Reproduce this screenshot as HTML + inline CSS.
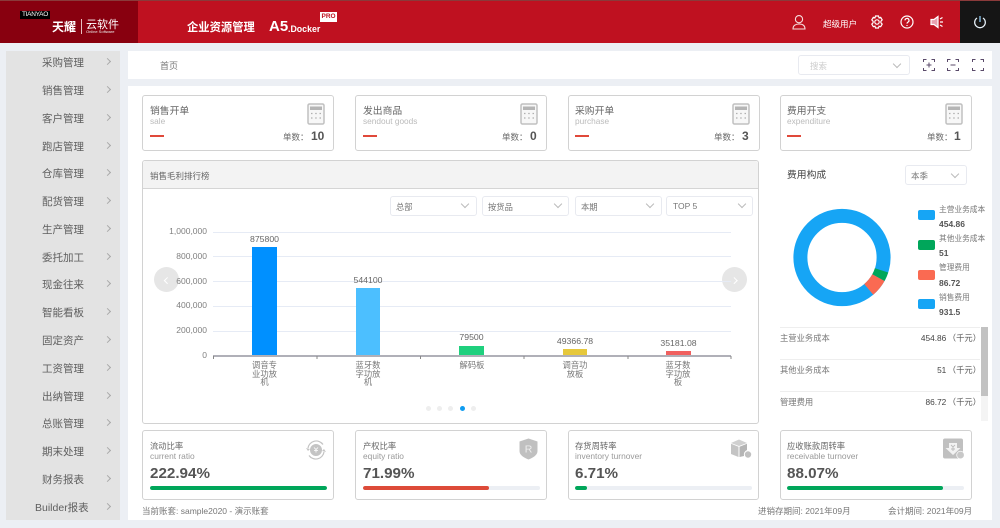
<!DOCTYPE html>
<html lang="zh"><head><meta charset="utf-8"><title>A5 Docker</title>
<style>
html,body{margin:0;padding:0}
body{width:1000px;height:528px;overflow:hidden;background:#eceff4;position:relative;font-family:"Liberation Sans","Noto Sans CJK SC",sans-serif;color:#666}
div,span.t{position:absolute}
.t{position:absolute;white-space:nowrap;line-height:14px;height:14px}
.m{font-size:10.5px;color:#5f5f5f;left:42px;margin-top:.5px}
.m2{position:absolute;left:105px;width:4px;height:4px;margin-top:-1px;border-top:1px solid #aaa;border-right:1px solid #aaa;transform:rotate(45deg)}
.card{background:#fff;border:1px solid #d2d2d2;border-radius:3px;box-sizing:border-box}
.sel{background:#fff;border:1px solid #e8eaf0;border-radius:3px;box-sizing:border-box;height:20px;top:196px}
.ch{position:absolute;width:5px;height:5px;border-right:1px solid #bbb;border-bottom:1px solid #bbb;transform:rotate(45deg)}
.ct{font-size:9.8px;color:#666;margin-top:.5px}.cs{font-size:8.3px;color:#bbb}
.rl{background:#e0493a;height:1.5px;width:14px;top:135px}
.ax{font-size:8.5px;color:#808080;text-align:right;width:50px;left:157px;margin-top:0}
.gl{left:213px;width:518px;height:1px;background:#e6ebf5}
.bl{font-size:8.7px;color:#666;text-align:center;width:60px}
.xl{font-size:8.3px;color:#777;text-align:center;width:26px;line-height:8.5px;white-space:normal;height:auto;position:absolute}
.bt{font-size:8.3px;color:#666;margin-top:.5px}.bs{font-size:8.4px;color:#999;margin-top:.5px}
.bv{font-size:15.2px;font-weight:bold;color:#555;line-height:18px;height:18px}
.pg{top:486px;height:4px;background:#eceff4;border-radius:2px;width:177px;overflow:hidden}
.pg div{top:0;left:0;height:4px;border-radius:2px}
.lg{font-size:7.7px;color:#777;left:939px}.lv{font-size:8.5px;color:#555;left:939px;font-weight:bold}
.sw{left:918px;width:17px;height:10px;border-radius:2px}
.rk{font-size:8.3px;color:#777;left:780px}.rv{font-size:8.3px;color:#555;right:19px}
.rv b{font-weight:normal;color:#444;margin-right:1.5px}
.ft{font-size:8.5px;color:#777}
.dot{width:5px;height:5px;border-radius:50%;background:#eee;top:406px}
.ar{width:25px;height:25px;border-radius:50%;background:#e6e6e6;top:267px}
svg{position:absolute}
</style></head><body>

<div style="left:0;top:0;width:1000px;height:43px;background:#bf1120"></div>
<div style="left:0;top:0;width:1000px;height:1px;background:#8a3a3a"></div>
<div style="left:0;top:1px;width:138px;height:42px;background:#88000f"></div>
<div style="left:960px;top:1px;width:40px;height:42px;background:#151515"></div>

<div style="left:20px;top:11px;width:30px;height:8px;background:#000"></div>
<span class="t" style="left:22px;top:8px;font-size:6.5px;color:#fff;letter-spacing:-.3px">TIANYAO</span>
<span class="t" style="left:52px;top:20px;font-size:12px;font-weight:bold;color:#fff">天耀</span>
<div style="left:80.5px;top:19px;width:1px;height:15px;background:#e8c0c0"></div>
<span class="t" style="left:86px;top:17.5px;font-size:11px;color:#fff">云软件</span>
<span class="t" style="left:86px;top:25px;font-size:4px;color:#eee">Online Software</span>
<span class="t" style="left:187px;top:21px;font-size:11.3px;color:#fff;font-weight:bold">企业资源管理</span>
<span class="t" style="left:269px;top:20px;font-size:15px;color:#fff;font-weight:bold">A5</span>
<span class="t" style="left:288px;top:22px;font-size:8.8px;color:#fff;font-weight:bold">.Docker</span>
<div style="left:320px;top:12px;width:17px;height:10px;background:#fff"></div>
<span class="t" style="left:321.5px;top:10px;font-size:6.5px;color:#bf1120;font-weight:bold">PRO</span>

<svg style="left:791px;top:14px" width="16" height="16" viewBox="0 0 16 16" fill="none" stroke="#f6dede" stroke-width="1.1"><circle cx="8" cy="5.2" r="3.6"/><path d="M2 15c0-3.6 2.6-5 6-5s6 1.4 6 5z"/></svg>
<span class="t" style="left:823px;top:16.5px;font-size:8.5px;color:#fff">超级用户</span>
<svg style="left:870px;top:15px" width="14" height="14" viewBox="0 0 14 14" fill="none" stroke="#fff" stroke-width="1.2"><path d="M5.5 1h3l.5 1.800 1.700-.5 1.500 2.600-1.300 1.300v1.600l1.300 1.300-1.500 2.600-1.700-.5-.5 1.800h-3l-.5-1.800-1.700.5L1.800 9.100l1.300-1.300V6.200L1.800 4.900l1.500-2.600 1.700.5z"/><circle cx="7" cy="7" r="2.2"/></svg>
<svg style="left:900px;top:15px" width="14" height="14" viewBox="0 0 14 14" fill="none" stroke="#fff" stroke-width="1.2"><circle cx="7" cy="7" r="6"/><path d="M5 5.400a2 2 0 1 1 3 1.700c-.7.400-1 .8-1 1.500"/><path d="M7 10v1"/></svg>
<svg style="left:930px;top:15px" width="14" height="14" viewBox="0 0 14 14" fill="none" stroke="#fff" stroke-width="1.2"><path d="M1 4.500h3L8 1.500v11l-4-3H1z" fill="#e8a0b0"/><path d="M10 4l2.500-1.500M10 7h3M10 10l2.500 1.500"/></svg>
<svg style="left:973px;top:15px" width="14" height="14" viewBox="0 0 14 14" fill="none" stroke="#e8f2fa" stroke-width="1.3"><path d="M4 3a5.300 5.300 0 1 0 6 0"/><path d="M7 1v6" stroke="#8cc8f0"/></svg>

<div style="left:6px;top:51px;width:114px;height:469px;background:#e3e3e3"></div>
<span class="t m" style="top:55px">采购管理</span><i class="m2" style="top:60px"></i>
<span class="t m" style="top:83px">销售管理</span><i class="m2" style="top:88px"></i>
<span class="t m" style="top:111px">客户管理</span><i class="m2" style="top:116px"></i>
<span class="t m" style="top:139px">跑店管理</span><i class="m2" style="top:144px"></i>
<span class="t m" style="top:166px">仓库管理</span><i class="m2" style="top:171px"></i>
<span class="t m" style="top:194px">配货管理</span><i class="m2" style="top:199px"></i>
<span class="t m" style="top:222px">生产管理</span><i class="m2" style="top:227px"></i>
<span class="t m" style="top:250px">委托加工</span><i class="m2" style="top:255px"></i>
<span class="t m" style="top:277px">现金往来</span><i class="m2" style="top:282px"></i>
<span class="t m" style="top:305px">智能看板</span><i class="m2" style="top:310px"></i>
<span class="t m" style="top:333px">固定资产</span><i class="m2" style="top:338px"></i>
<span class="t m" style="top:361px">工资管理</span><i class="m2" style="top:366px"></i>
<span class="t m" style="top:389px">出纳管理</span><i class="m2" style="top:394px"></i>
<span class="t m" style="top:416px">总账管理</span><i class="m2" style="top:421px"></i>
<span class="t m" style="top:444px">期末处理</span><i class="m2" style="top:449px"></i>
<span class="t m" style="top:472px">财务报表</span><i class="m2" style="top:477px"></i>
<span class="t m" style="top:500px;left:35px">Builder报表</span><i class="m2" style="top:505px"></i>

<div style="left:128px;top:51px;width:864px;height:28px;background:#fff"></div>
<div style="left:128px;top:86px;width:864px;height:434px;background:#fff"></div>
<span class="t" style="left:160px;top:59px;font-size:9px;color:#777">首页</span>
<div class="sel" style="left:798px;top:55px;width:112px"></div>
<span class="t" style="left:810px;top:59px;font-size:8.5px;color:#ccc">搜索</span>
<i class="ch" style="left:894px;top:61px"></i>

<svg style="left:923px;top:59px" width="62" height="12" viewBox="0 0 62 12" fill="none" stroke="#5a4a6a" stroke-width="1"><path d="M.5 3v-2.500h3M8.500.5h3V3M11.500 9v2.500h-3M3.500 11.500h-3V9M6 3.500v5M3.500 6h5"/><path d="M24.500 3v-2.500h3M32.500.5h3V3M35.500 9v2.500h-3M27.500 11.500h-3V9M27.500 6h5"/><path d="M49.500 3v-2.500h3M57.500.5h3V3M60.500 9v2.500h-3M52.500 11.500h-3V9"/></svg>

<div class="card" style="left:142px;top:95px;width:192px;height:56px"></div>
<span class="t ct" style="left:150px;top:104px">销售开单</span><span class="t cs" style="left:150px;top:114px">sale</span><div class="rl" style="left:150px"></div>
<span class="t" style="left:283px;top:130px;font-size:8.5px;color:#666">单数：</span><span class="t" style="left:311px;top:129px;font-size:12px;font-weight:bold;color:#555">10</span>
<div class="card" style="left:355px;top:95px;width:192px;height:56px"></div>
<span class="t ct" style="left:363px;top:104px">发出商品</span><span class="t cs" style="left:363px;top:114px">sendout goods</span><div class="rl" style="left:363px"></div>
<span class="t" style="left:502px;top:130px;font-size:8.5px;color:#666">单数：</span><span class="t" style="left:530px;top:129px;font-size:12px;font-weight:bold;color:#555">0</span>
<div class="card" style="left:568px;top:95px;width:192px;height:56px"></div>
<span class="t ct" style="left:575px;top:104px">采购开单</span><span class="t cs" style="left:575px;top:114px">purchase</span><div class="rl" style="left:575px"></div>
<span class="t" style="left:714px;top:130px;font-size:8.5px;color:#666">单数：</span><span class="t" style="left:742px;top:129px;font-size:12px;font-weight:bold;color:#555">3</span>
<div class="card" style="left:780px;top:95px;width:192px;height:56px"></div>
<span class="t ct" style="left:787px;top:104px">费用开支</span><span class="t cs" style="left:787px;top:114px">expenditure</span><div class="rl" style="left:787px"></div>
<span class="t" style="left:927px;top:130px;font-size:8.5px;color:#666">单数：</span><span class="t" style="left:954px;top:129px;font-size:12px;font-weight:bold;color:#555">1</span>

<svg style="left:307px;top:103px" width="18" height="22" viewBox="0 0 18 22"><rect x="1" y="1" width="16" height="20" rx="1.5" fill="#f7f7f7" stroke="#c0c0c0" stroke-width="1.5"/><rect x="3" y="3.500" width="12" height="3.500" fill="#b5b5b5"/><path d="M4 10.500h1.500M8.200 10.500h1.500M12.500 10.500h1.500M4 15h1.500M8.200 15h1.500M12.500 15h1.500" stroke="#b0b0b0" stroke-width="1.3"/></svg>
<svg style="left:520px;top:103px" width="18" height="22" viewBox="0 0 18 22"><rect x="1" y="1" width="16" height="20" rx="1.5" fill="#f7f7f7" stroke="#c0c0c0" stroke-width="1.5"/><rect x="3" y="3.500" width="12" height="3.500" fill="#b5b5b5"/><path d="M4 10.500h1.500M8.200 10.500h1.500M12.500 10.500h1.500M4 15h1.500M8.200 15h1.500M12.500 15h1.500" stroke="#b0b0b0" stroke-width="1.3"/></svg>
<svg style="left:732px;top:103px" width="18" height="22" viewBox="0 0 18 22"><rect x="1" y="1" width="16" height="20" rx="1.5" fill="#f7f7f7" stroke="#c0c0c0" stroke-width="1.5"/><rect x="3" y="3.500" width="12" height="3.500" fill="#b5b5b5"/><path d="M4 10.500h1.500M8.200 10.500h1.500M12.500 10.500h1.500M4 15h1.500M8.200 15h1.500M12.500 15h1.500" stroke="#b0b0b0" stroke-width="1.3"/></svg>
<svg style="left:945px;top:103px" width="18" height="22" viewBox="0 0 18 22"><rect x="1" y="1" width="16" height="20" rx="1.5" fill="#f7f7f7" stroke="#c0c0c0" stroke-width="1.5"/><rect x="3" y="3.500" width="12" height="3.500" fill="#b5b5b5"/><path d="M4 10.500h1.500M8.200 10.500h1.500M12.500 10.500h1.500M4 15h1.500M8.200 15h1.500M12.500 15h1.500" stroke="#b0b0b0" stroke-width="1.3"/></svg>

<div class="card" style="left:142px;top:160px;width:617px;height:264px"></div>
<div style="left:143px;top:161px;width:615px;height:27px;background:#f3f3f3;border-bottom:1px solid #d5d5d5;border-radius:3px 3px 0 0"></div>
<span class="t" style="left:150px;top:168.500px;font-size:8.5px;color:#666">销售毛利排行榜</span>

<div class="sel" style="left:390px;width:87px"></div><span class="t" style="left:396px;top:199.500px;font-size:8.3px;color:#777">总部</span><i class="ch" style="left:462px;top:201px"></i>
<div class="sel" style="left:482px;width:87px"></div><span class="t" style="left:488px;top:199.500px;font-size:8.3px;color:#777">按货品</span><i class="ch" style="left:555px;top:201px"></i>
<div class="sel" style="left:575px;width:87px"></div><span class="t" style="left:581px;top:199.500px;font-size:8.3px;color:#777">本期</span><i class="ch" style="left:647px;top:201px"></i>
<div class="sel" style="left:666px;width:87px"></div><span class="t" style="left:673px;top:199px;font-size:8.5px;color:#777">TOP 5</span><i class="ch" style="left:739px;top:201px"></i>

<div class="ar" style="left:154px"></div>
<div style="left:165px;top:278px;width:3.5px;height:3.5px;border-left:1px solid #fff;border-bottom:1px solid #fff;transform:rotate(45deg)"></div>
<div class="ar" style="left:722px"></div>
<div style="left:732px;top:278px;width:3.5px;height:3.5px;border-right:1px solid #fff;border-top:1px solid #fff;transform:rotate(45deg)"></div>

<div class="gl" style="top:232px"></div><div class="gl" style="top:256px"></div><div class="gl" style="top:281px"></div><div class="gl" style="top:306px"></div><div class="gl" style="top:331px"></div>
<span class="t ax" style="top:224px">1,000,000</span><span class="t ax" style="top:249px">800,000</span><span class="t ax" style="top:274px">600,000</span><span class="t ax" style="top:298px">400,000</span><span class="t ax" style="top:323px">200,000</span><span class="t ax" style="top:348px">0</span>

<div style="left:252px;top:247px;width:25px;height:109px;background:#0090ff"></div>
<div style="left:356px;top:288px;width:24px;height:68px;background:#4cbfff"></div>
<div style="left:459px;top:346px;width:25px;height:10px;background:#1fd07e"></div>
<div style="left:563px;top:349px;width:24px;height:7px;background:#e6c83c"></div>
<div style="left:666px;top:351px;width:25px;height:5px;background:#f0605f"></div>
<div style="left:213px;top:355px;width:518px;height:1.5px;background:#b0b0b8"></div>
<svg style="left:213px;top:356px" width="520" height="3"><path d="M.5 0v3M104 0v3M207.500 0v3M311 0v3M415 0v3M518 0v3" stroke="#888" stroke-width="1"/></svg>

<span class="t bl" style="left:234.500px;top:232px">875800</span>
<span class="t bl" style="left:338px;top:273px">544100</span>
<span class="t bl" style="left:441.500px;top:330px">79500</span>
<span class="t bl" style="left:545px;top:334px">49366.78</span>
<span class="t bl" style="left:648.500px;top:336px">35181.08</span>

<span class="xl" style="left:251.500px;top:361px">调音专业功放机</span>
<span class="xl" style="left:355px;top:361px">蓝牙数字功放机</span>
<span class="xl" style="left:459px;top:361px">解码板</span>
<span class="xl" style="left:562px;top:361px">调音功放板</span>
<span class="xl" style="left:665px;top:361px">蓝牙数字功放板</span>

<div class="dot" style="left:426px"></div><div class="dot" style="left:437px"></div><div class="dot" style="left:448px"></div><div class="dot" style="left:460px;background:#0f9cf0"></div><div class="dot" style="left:471px"></div>

<span class="t" style="left:787px;top:168.500px;font-size:9.8px;color:#444">费用构成</span>
<div class="sel" style="left:905px;top:165px;width:62px"></div>
<span class="t" style="left:911px;top:169px;font-size:8.5px;color:#777">本季</span><i class="ch" style="left:952px;top:171px"></i>

<svg style="left:790px;top:206px" width="104" height="104" viewBox="0 0 104 104" fill="none" stroke-width="14">
<circle cx="52" cy="51.500" r="41.600" stroke="#16a5f5"/>
<circle cx="52" cy="51.500" r="41.600" stroke="#00a65a" pathLength="360" stroke-dasharray="11 349" transform="rotate(18 52 51.500)"/>
<circle cx="52" cy="51.500" r="41.600" stroke="#fa6a52" pathLength="360" stroke-dasharray="21 339" transform="rotate(29 52 51.500)"/>
</svg>

<div class="sw" style="top:210px;background:#16a5f5"></div><span class="t lg" style="top:202.500px">主营业务成本</span><span class="t lv" style="top:216.500px">454.86</span>
<div class="sw" style="top:240px;background:#00a65a"></div><span class="t lg" style="top:232px">其他业务成本</span><span class="t lv" style="top:245.500px">51</span>
<div class="sw" style="top:270px;background:#fa6a52"></div><span class="t lg" style="top:261px">管理费用</span><span class="t lv" style="top:275.500px">86.72</span>
<div class="sw" style="top:299px;background:#16a5f5"></div><span class="t lg" style="top:291px">销售费用</span><span class="t lv" style="top:304.500px">931.5</span>

<div style="left:780px;top:327px;width:200px;height:1px;background:#eee"></div>
<div style="left:780px;top:359px;width:200px;height:1px;background:#eee"></div>
<div style="left:780px;top:391px;width:200px;height:1px;background:#eee"></div>
<span class="t rk" style="top:331px">主营业务成本</span><span class="t rv" style="top:331px"><b>454.86</b>（千元）</span>
<span class="t rk" style="top:363px">其他业务成本</span><span class="t rv" style="top:363px"><b>51</b>（千元）</span>
<span class="t rk" style="top:395px">管理费用</span><span class="t rv" style="top:395px"><b>86.72</b>（千元）</span>
<div style="left:981px;top:327px;width:7px;height:94px;background:#f4f4f4"></div>
<div style="left:981px;top:327px;width:7px;height:69px;background:#c2c2c2"></div>

<div class="card" style="left:142px;top:430px;width:192px;height:70px"></div>
<span class="t bt" style="left:150px;top:438px">流动比率</span><span class="t bs" style="left:150px;top:448px">current ratio</span><span class="t bv" style="left:150px;top:465px">222.94%</span>
<div class="pg" style="left:150px"><div style="width:177px;background:#00a65a"></div></div>
<div class="card" style="left:355px;top:430px;width:192px;height:70px"></div>
<span class="t bt" style="left:363px;top:438px">产权比率</span><span class="t bs" style="left:363px;top:448px">equity ratio</span><span class="t bv" style="left:363px;top:465px">71.99%</span>
<div class="pg" style="left:363px"><div style="width:126px;background:#dd4b39"></div></div>
<div class="card" style="left:568px;top:430px;width:191px;height:70px"></div>
<span class="t bt" style="left:575px;top:438px">存货周转率</span><span class="t bs" style="left:575px;top:448px">inventory turnover</span><span class="t bv" style="left:575px;top:465px">6.71%</span>
<div class="pg" style="left:575px"><div style="width:12px;background:#00a65a"></div></div>
<div class="card" style="left:780px;top:430px;width:192px;height:70px"></div>
<span class="t bt" style="left:787px;top:438px">应收账款周转率</span><span class="t bs" style="left:787px;top:448px">receivable turnover</span><span class="t bv" style="left:787px;top:465px">88.07%</span>
<div class="pg" style="left:787px"><div style="width:156px;background:#00a65a"></div></div>

<svg style="left:305px;top:439px" width="22" height="22" viewBox="0 0 22 22" fill="none" stroke="#c4c4c4"><circle cx="11" cy="11" r="5.500" fill="#c4c4c4"/><path d="M3 9a8.300 8.300 0 0 1 15-3.500M19 13a8.300 8.300 0 0 1-15 3.500" stroke-width="1.2"/><path d="M1 9l4 1-2 2zM21 13l-4-1 2-2z" fill="#c4c4c4" stroke="none"/><path d="M9 8.500l2 2 2-2M11 10.500v3M9 11.500h4" stroke="#fff" stroke-width=".8"/></svg>
<svg style="left:519px;top:438px" width="19" height="22" viewBox="0 0 19 22"><path d="M9.500 .5L18.500 3.500V13c0 4-4 6.500-9 8.500-5-2-9-4.500-9-8.500V3.500z" fill="#c0c0c0"/><text x="9.500" y="14.500" font-size="10.500" fill="#eee" text-anchor="middle" font-family="Liberation Sans">R</text></svg>
<svg style="left:730px;top:439px" width="22" height="20" viewBox="0 0 22 20"><path d="M1 4l8-3.500L17 4 9 7z" fill="#d0d0d0"/><path d="M1 4.800l7.500 3V18L1 15z" fill="#c4c4c4"/><path d="M9.500 7.800l7.500-3V11a5 5 0 0 0-3 6l-4.500 1z" fill="#b5b5b5"/><circle cx="18" cy="15.500" r="3.200" fill="#c0c0c0"/></svg>
<svg style="left:943px;top:438px" width="22" height="22" viewBox="0 0 22 22"><rect x="0" y=".5" width="20" height="20" rx="2" fill="#c0c0c0"/><path d="M6 5h8v5h3.500L10 17 2.500 10H6z" fill="#f2f2f2"/><path d="M8 7l2 2 2-2M10 9v4M8 11h4" stroke="#bbb" stroke-width=".9" fill="none"/><circle cx="17.500" cy="17" r="3.800" fill="#c8c8c8" stroke="#fff" stroke-width=".7"/></svg>

<span class="t ft" style="left:142px;top:503.500px">当前账套: sample2020 - 演示账套</span>
<span class="t ft" style="left:758px;top:503.500px">进销存期间: 2021年09月</span>
<span class="t ft" style="left:888px;top:503.500px">会计期间: 2021年09月</span>

</body></html>
